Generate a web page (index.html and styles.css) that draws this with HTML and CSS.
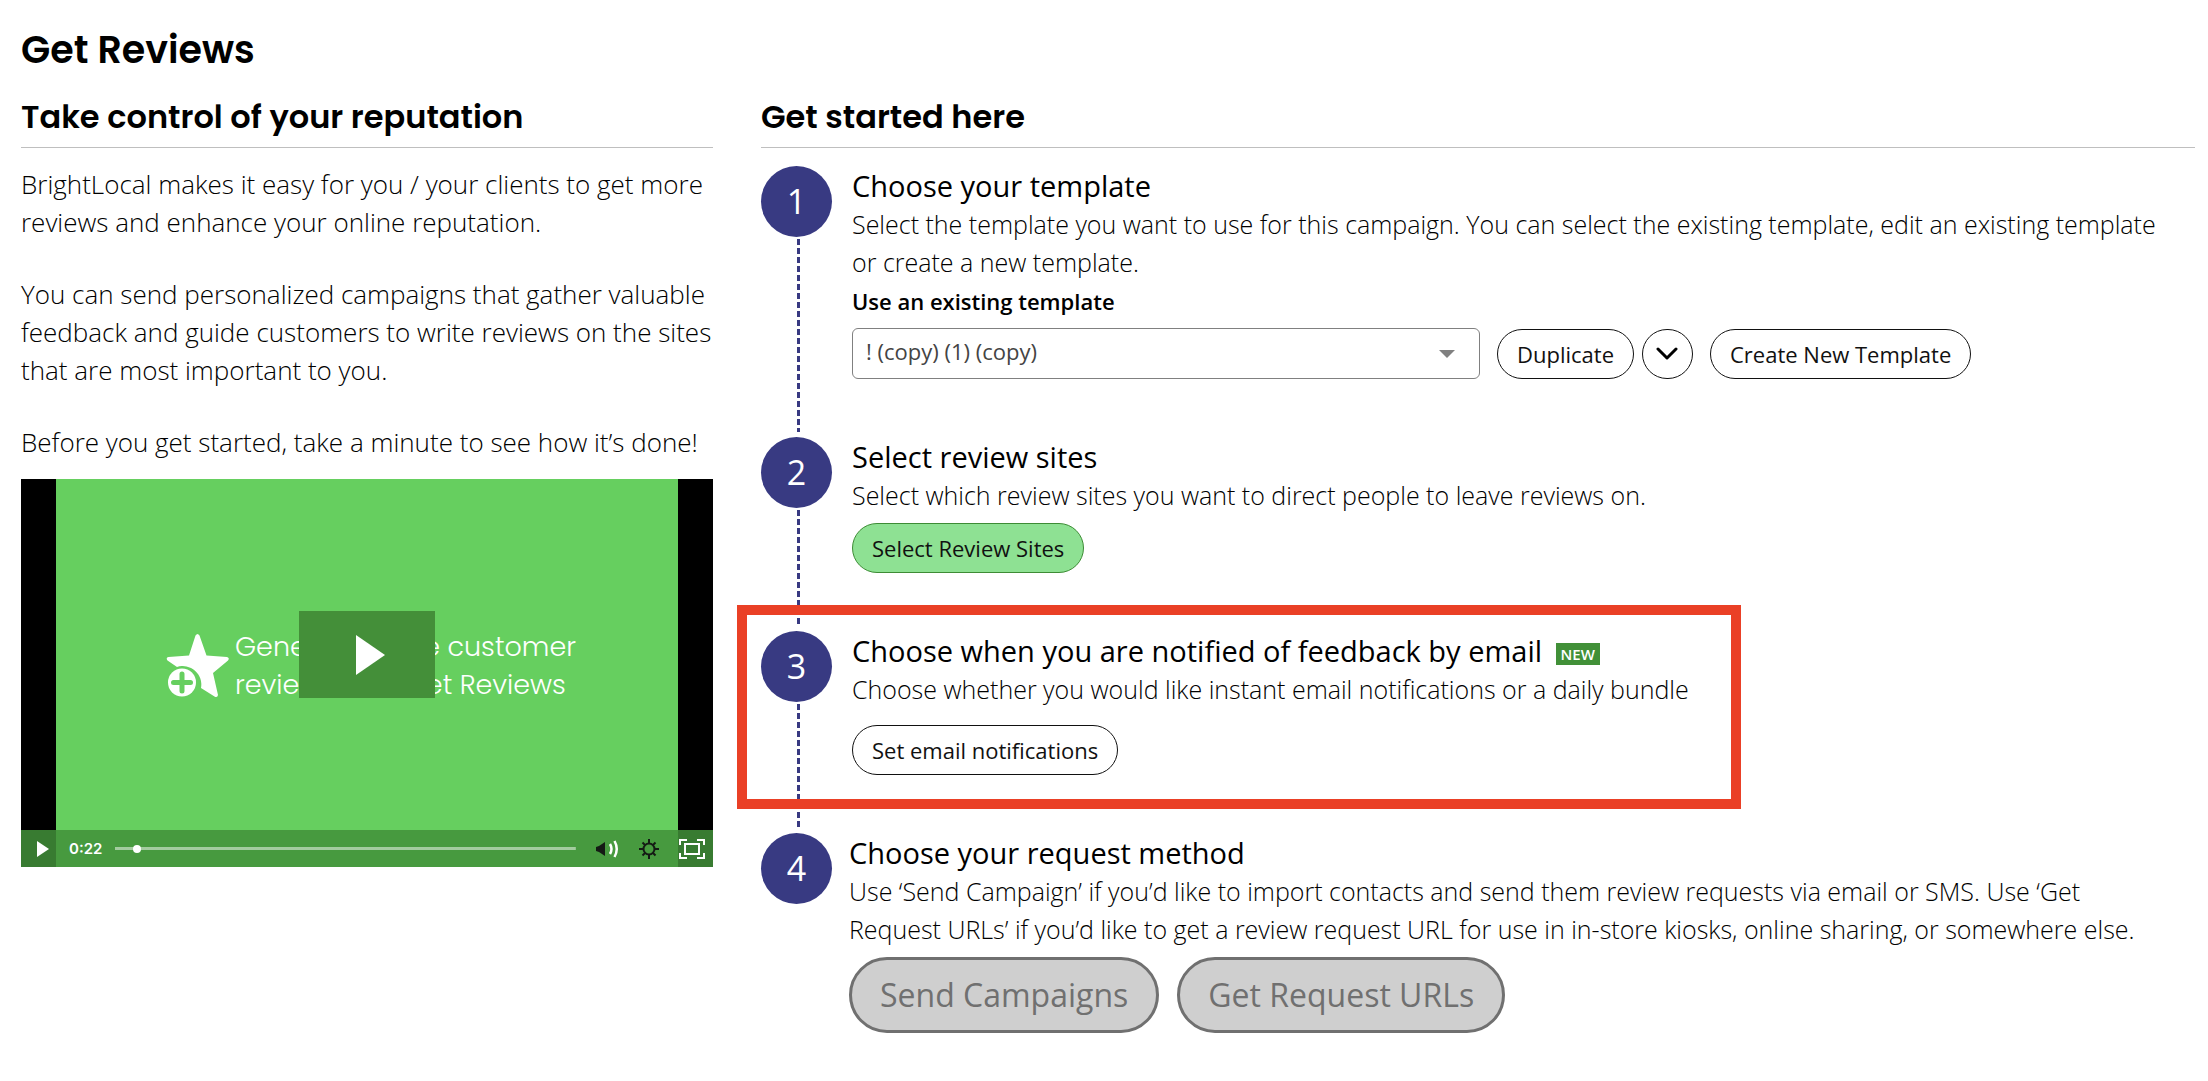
FILE: index.html
```html
<!DOCTYPE html>
<html lang="en">
<head>
<meta charset="utf-8">
<meta name="viewport" content="width=device-width, initial-scale=1">
<title>Get Reviews</title>
<link rel="stylesheet" href="styles.css">
</head>
<body>
<main class="page">
  <h1 class="page-title">Get Reviews</h1>
  <div class="columns">
    <section class="intro">
      <h2 class="section-title">Take control of your reputation</h2>
      <div class="intro-text">
        <p>BrightLocal makes it easy for you / your clients to get more reviews and enhance your online reputation.</p>
        <p>You can send personalized campaigns that gather valuable feedback and guide customers to write reviews on the sites that are most important to you.</p>
        <p>Before you get started, take a minute to see how it’s done!</p>
      </div>
      <div class="video">
        <div class="slide">
          <svg class="slide-star" viewBox="0 0 64 64" width="64" height="64" aria-hidden="true">
            <path d="M29.500 1.500Q31.500-1.500 33.500 1.500L40.500 21.500L61 23Q64 24 62 26.500L47 39L52 61Q51.500 64 48.500 62.500L35 54A18.500 18.500 0 0 0 11 33L1.500 26.500Q-.5 23.500 2.500 23L23 21.500Z" fill="#fff"/>
            <circle cx="16" cy="48.500" r="14" fill="#fff"/>
            <path d="M16 40v17M7.500 48.500h17" stroke="#66cf5f" stroke-width="5" stroke-linecap="round"/>
          </svg>
          <p class="slide-text">Generate more customer<br>reviews with Get Reviews</p>
        </div>
        <div class="stage">
          <button class="big-play" type="button" aria-label="Play video">
            <svg viewBox="0 0 29 40" width="29" height="40"><path d="M0 0L29 20L0 40Z" fill="#fff"/></svg>
          </button>
        </div>
        <div class="controls">
          <button class="icon-button" type="button" aria-label="Play">
            <svg viewBox="0 0 12 16" width="12" height="16"><path d="M0 0L12 8L0 16Z" fill="#fff"/></svg>
          </button>
          <div class="progress">
            <span class="time">0:22</span>
            <input class="seek" type="range" min="0" max="100" value="4" aria-label="Seek">
          </div>
          <button class="icon-button" type="button" aria-label="Volume">
            <svg viewBox="0 0 23 18" width="23" height="18"><path d="M0 7L3 6L9 2V16L3 12L0 11Z" fill="#141a14"/><path d="M14 4Q17 9 14 14M18.500 1Q23 9 18.500 17" fill="none" stroke="#fff" stroke-width="2.500"/></svg>
          </button>
          <button class="icon-button" type="button" aria-label="Settings">
            <svg viewBox="0 0 20 20" width="20" height="20" fill="none" stroke="#141a14"><circle cx="10" cy="10" r="5.500" stroke-width="2"/><path d="M10 0v4M10 16v4M0 10h4M16 10h4M3.500 3.500l2.500 2.500M14 14l2.500 2.500M16.500 3.500L14 6M6 14l-2.500 2.500" stroke-width="2"/></svg>
          </button>
          <button class="icon-button" type="button" aria-label="Full screen">
            <svg viewBox="0 0 26 20" width="26" height="20" fill="none" stroke="#fff" stroke-width="2"><path d="M1 6V1H8M18 1H25V6M25 14V19H18M8 19H1V14M6 5H20V15H6Z"/></svg>
          </button>
        </div>
      </div>
    </section>

    <section class="start">
      <h2 class="section-title">Get started here</h2>
      <ol class="steps">
        <li class="step">
          <div class="marker"><span class="number">1</span></div>
          <div class="step-body">
            <h3 class="step-title">Choose your template</h3>
            <p class="step-text">Select the template you want to use for this campaign. You can select the existing template, edit an existing template or create a new template.</p>
            <label class="field-label" for="template">Use an existing template</label>
            <div class="template-row">
              <div class="select-box">
                <select class="select" id="template"><option>! (copy) (1) (copy)</option></select>
                <svg class="select-arrow" viewBox="0 0 16 8" width="16" height="8" aria-hidden="true"><path d="M0 0H16L8 8Z" fill="#808080"/></svg>
              </div>
              <div class="split">
                <button class="button" type="button">Duplicate</button>
                <button class="button button-round" type="button" aria-label="More template actions">
                  <svg viewBox="0 0 22 13" width="22" height="13"><path d="M2 2L11 11L20 2" fill="none" stroke="#000" stroke-width="3" stroke-linecap="round" stroke-linejoin="round"/></svg>
                </button>
              </div>
              <button class="button" type="button">Create New Template</button>
            </div>
          </div>
        </li>
        <li class="step">
          <div class="marker"><span class="number">2</span></div>
          <div class="step-body">
            <h3 class="step-title">Select review sites</h3>
            <p class="step-text">Select which review sites you want to direct people to leave reviews on.</p>
            <button class="button button-green" type="button">Select Review Sites</button>
          </div>
        </li>
        <li class="step step-highlight">
          <div class="marker"><span class="number">3</span></div>
          <div class="step-body">
            <h3 class="step-title">Choose when you are notified of feedback by email <span class="badge">NEW</span></h3>
            <p class="step-text">Choose whether you would like instant email notifications or a daily bundle</p>
            <button class="button button-spaced" type="button">Set email notifications</button>
          </div>
        </li>
        <li class="step step-last">
          <div class="marker"><span class="number">4</span></div>
          <div class="step-body">
            <h3 class="step-title">Choose your request method</h3>
            <p class="step-text">Use ‘Send Campaign’ if you’d like to import contacts and send them review requests via email or SMS. Use ‘Get Request URLs’ if you’d like to get a review request URL for use in in-store kiosks, online sharing, or somewhere else.</p>
            <div class="request-row">
              <button class="button-large" type="button" disabled>Send Campaigns</button>
              <button class="button-large" type="button" disabled>Get Request URLs</button>
            </div>
          </div>
        </li>
      </ol>
    </section>
  </div>
</main>
</body>
</html>
```
FILE: styles.css
```css
* { box-sizing: border-box; }

body {
  margin: 0;
  background: #fff;
  color: #000;
  font-family: "Open Sans", sans-serif;
  font-size: 26px;
  font-weight: 300;
  line-height: 38px;
}

h1, h2, h3, p, ol { margin: 0; padding: 0; font-weight: inherit; }
ol { list-style: none; }
svg { display: block; }
button, select, input { font: inherit; color: inherit; margin: 0; }

.page { padding: 26px 13px 49px 21px; }

.page-title {
  font-family: Poppins, Inter, sans-serif;
  font-size: 38px;
  font-weight: 600;
  line-height: 48px;
}

.columns {
  display: grid;
  grid-template-columns: 692fr 1434fr;
  gap: 48px;
  margin-top: 19px;
}

.section-title {
  padding-bottom: 6px;
  border-bottom: 1px solid #bfbfbf;
  font-family: Poppins, Inter, sans-serif;
  font-size: 32px;
  font-weight: 600;
  line-height: 48px;
}

.intro-text {
  display: flex;
  flex-direction: column;
  gap: 34px;
  margin: 17px 0 18px;
}

/* Video player */
.video {
  display: grid;
  grid-template-rows: 1fr 37px;
  aspect-ratio: 692 / 388;
  background: #000;
}
.slide {
  grid-area: 1 / 1 / 3 / 2;
  display: flex;
  align-items: center;
  justify-content: center;
  gap: 5px;
  margin: 0 35px;
  padding: 0 0 14px 8px;
  background: #66cf5f;
}
.slide-text {
  color: #fff;
  font-family: Poppins, Inter, sans-serif;
  font-size: 27px;
  font-weight: 300;
  white-space: nowrap;
}
.stage {
  grid-area: 1 / 1;
  display: flex;
  align-items: center;
  justify-content: center;
  z-index: 1;
}
.big-play {
  display: flex;
  align-items: center;
  justify-content: center;
  width: 136px;
  height: 87px;
  padding: 0 0 0 6px;
  border: 0;
  background: #448f39;
}
.controls {
  grid-area: 2 / 1;
  display: flex;
  align-items: center;
  gap: 20px;
  padding: 0 8px 0 16px;
  background: rgba(66, 144, 57, .85);
  z-index: 1;
}
.icon-button { padding: 0; border: 0; background: none; }
.progress {
  display: flex;
  flex: 1;
  align-items: center;
  gap: 13px;
  min-width: 0;
}
.time {
  color: #fff;
  font-family: Inter, sans-serif;
  font-size: 15px;
  font-weight: 600;
}
.seek {
  flex: 1;
  min-width: 0;
  height: 10px;
  appearance: none;
  background: linear-gradient(#a3cc9f, #a3cc9f) center / 100% 3px no-repeat;
}
.seek::-webkit-slider-thumb {
  appearance: none;
  width: 8px;
  height: 8px;
  border-radius: 50%;
  background: #fff;
}

/* Numbered steps */
.steps { margin-top: 18px; }
.step {
  position: relative;
  display: grid;
  grid-template-columns: 71px 1fr;
  gap: 20px;
}
.step-last { gap: 17px; }
.marker { display: flex; flex-direction: column; }
.number {
  width: 71px;
  height: 71px;
  border-radius: 50%;
  background: #383a82;
  color: #fff;
  font-size: 34px;
  font-weight: 400;
  line-height: 71px;
  text-align: center;
}
.step:not(.step-last) .marker::after {
  content: "";
  flex: 1;
  width: 3px;
  margin: 2px 0 5px 36px;
  background: repeating-linear-gradient(#383a82 0 6px, transparent 6px 9px);
}
.step-body { min-width: 0; padding: 1px 0 58px; }
.step-last .step-body { padding-bottom: 0; }
.step-title { font-size: 29px; font-weight: 400; }
.step-text { padding-right: 28px; font-size: 25px; }

.step-highlight { width: fit-content; }
.step-highlight::after {
  content: "";
  position: absolute;
  inset: -26px -24px 24px;
  border: 10px solid #ea4026;
  pointer-events: none;
}

.badge {
  display: inline-block;
  margin-left: 6px;
  padding: 0 5px;
  background: #419038;
  color: #fff;
  font-size: 15px;
  font-weight: 600;
  line-height: 22px;
  vertical-align: 2px;
}

.field-label { display: block; font-size: 22px; font-weight: 600; line-height: 40px; }

.template-row { display: flex; align-items: center; gap: 17px; margin-top: 7px; }
.split { display: flex; gap: 8px; }
.select-box { position: relative; flex: 0 1 628px; }
.select {
  width: 100%;
  height: 51px;
  padding: 0 40px 6px 13px;
  border: 1px solid #808080;
  border-radius: 6px;
  appearance: none;
  background: #fff;
  color: #444;
  font-size: 22px;
  font-weight: 400;
}
.select-arrow { position: absolute; top: 22px; right: 25px; pointer-events: none; }

.button {
  height: 50px;
  padding: 0 19px;
  border: 1px solid #111;
  border-radius: 25px;
  background: #fff;
  color: #111;
  font-size: 22px;
  font-weight: 400;
  white-space: nowrap;
}
.button-round {
  display: flex;
  align-items: center;
  justify-content: center;
  width: 51px;
  padding: 0;
}
.button-green {
  display: block;
  margin-top: 9px;
  border-color: #3d8c35;
  background: #8ee193;
}
.button-spaced { display: block; margin-top: 17px; }

.request-row { display: flex; gap: 18px; margin-top: 9px; }
.button-large {
  height: 76px;
  padding: 0 28px;
  border: 3px solid #707070;
  border-radius: 38px;
  background: #cfcfcf;
  color: #707070;
  font-size: 32px;
  font-weight: 400;
  white-space: nowrap;
}
```
